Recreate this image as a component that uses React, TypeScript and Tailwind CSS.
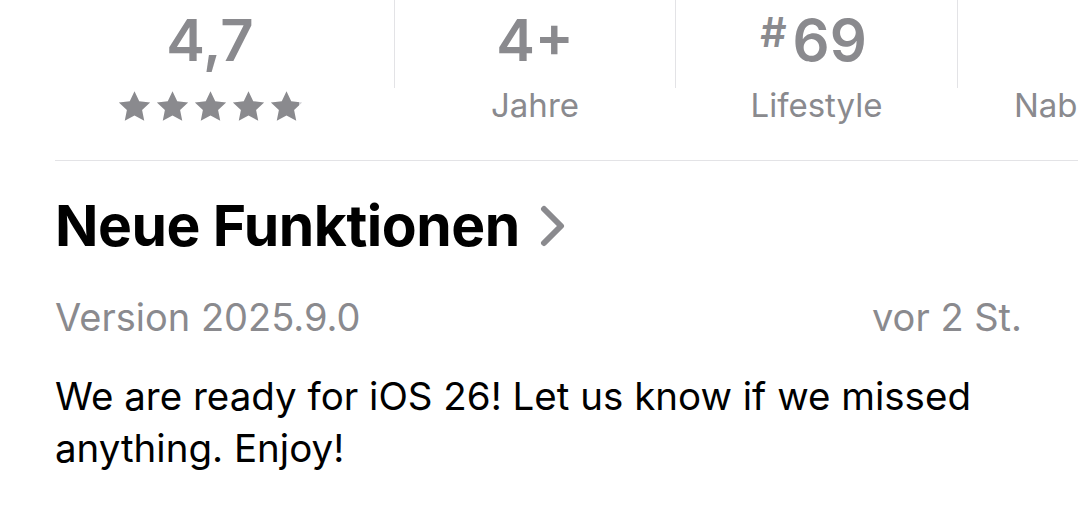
import React from 'react';

const Star: React.FC<{ fill?: number; id: string }> = ({ fill = 1, id }) => (
  <svg width="35" height="33" viewBox="0 0 24 23">
    <defs>
      <linearGradient id={id} x1="0" x2="1" y1="0" y2="0">
        <stop offset={fill} stopColor="#8a8a8e" />
        <stop offset={fill} stopColor="#d1d1d6" />
      </linearGradient>
    </defs>
    <path
      d="M12 0.8l3.3 7 7.6 0.9-5.6 5.2 1.5 7.6L12 17.7l-6.8 3.8 1.5-7.6L1.1 8.7l7.6-0.9z"
      fill={`url(#${id})`}
    />
  </svg>
);

const Divider = () => <div className="w-px h-[88px] bg-[#e3e3e6] shrink-0" />;

const App: React.FC = () => {
  return (
    <div className="w-[1078px] h-[516px] bg-white overflow-hidden font-['Inter',sans-serif]">
      {/* Info row */}
      <div className="flex h-[160px] whitespace-nowrap">
        <div className="w-[368px] ml-[26px] shrink-0 flex flex-col items-center">
          <div className="text-[58px] leading-[80px] font-semibold text-[#8a8a8e]">4,7</div>
          <div className="flex gap-[3px] mt-[10px]">
            <Star id="s1" />
            <Star id="s2" />
            <Star id="s3" />
            <Star id="s4" />
            <Star id="s5" fill={0.9} />
          </div>
        </div>
        <Divider />
        <div className="w-[280px] shrink-0 flex flex-col items-center">
          <div className="text-[58px] leading-[80px] font-semibold text-[#8a8a8e]">4+</div>
          <div className="text-[33px] leading-[50px] text-[#8a8a8e]">Jahre</div>
        </div>
        <Divider />
        <div className="w-[281px] shrink-0 flex flex-col items-center">
          <div className="text-[58px] leading-[80px] font-semibold text-[#8a8a8e] flex items-start pr-[6px]">
            <span className="text-[41px] leading-[64px] mr-[6px]">#</span>
            <span>69</span>
          </div>
          <div className="text-[33px] leading-[50px] text-[#8a8a8e]">Lifestyle</div>
        </div>
        <Divider />
        <div className="w-[282px] shrink-0 flex flex-col items-center pl-[12px]">
          <div className="text-[58px] leading-[80px] font-semibold text-[#8a8a8e]">&nbsp;</div>
          <div className="text-[33px] leading-[50px] text-[#8a8a8e]">Nabenutzer</div>
        </div>
      </div>

      <div className="ml-[55px] border-t border-[#e3e3e6]" />

      {/* What's new */}
      <div className="pl-[55px] pr-[56px]">
        <div className="flex items-center mt-[30px] h-[70px]">
          <h2 className="text-[57px] font-bold text-black tracking-[-0.5px] leading-[70px]">
            Neue Funktionen
          </h2>
          <svg className="ml-[20px]" width="26" height="42" viewBox="0 0 26 42">
            <path d="M4 4l17 17-17 17" fill="none" stroke="#8a8a8e" strokeWidth="6" strokeLinecap="round" strokeLinejoin="round" />
          </svg>
        </div>
        <div className="flex justify-between mt-[31px] text-[38px] leading-[50px] text-[#8a8a8e]">
          <span>Version 2025.9.0</span>
          <span>vor 2 St.</span>
        </div>
        <p className="mt-[28px] text-[38.5px] leading-[52px] text-black">
          We are ready for iOS 26! Let us know if we missed anything. Enjoy!
        </p>
      </div>
    </div>
  );
};

export default App;
